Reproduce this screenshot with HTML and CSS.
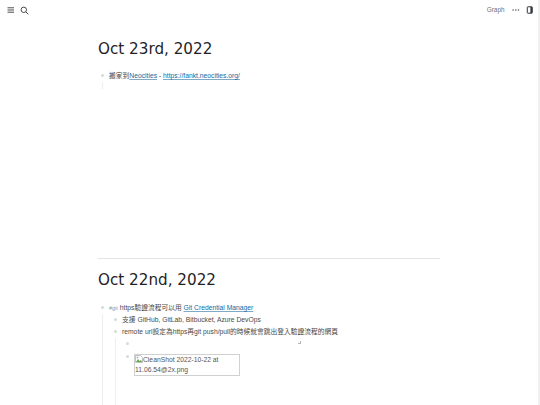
FILE: index.html
```html
<!DOCTYPE html>
<html lang="zh-Hant">
<head>
<meta charset="utf-8">
<title>Journals</title>
<link rel="stylesheet" href="styles.css">
</head>
<body>
<div class="app">
  <header class="topbar">
    <div class="tools">
      <svg class="icon" width="8" height="8" viewBox="0 0 8 8"><path d="M.5 1.8h6.5M.5 4h6.5M.5 6.2h6.5" fill="none" stroke="#33383c" stroke-width="0.9"/></svg>
      <svg class="icon" width="9" height="9" viewBox="0 0 9 9"><circle cx="3.8" cy="3.8" r="2.7" fill="none" stroke="#33383c" stroke-width="0.9"/><path d="M5.8 5.8L8.3 8.3" stroke="#33383c" stroke-width="0.9"/></svg>
    </div>
    <div class="tools tools-right">
      <span class="graph">Graph</span>
      <svg class="icon" width="8" height="8" viewBox="0 0 8 8"><path d="M.4 4h1.4M3.1 4h1.4M5.8 4h1.4" fill="none" stroke="#33383c" stroke-width="1"/></svg>
      <svg class="icon" width="8" height="8" viewBox="0 0 8 8"><rect x="2.3" y=".8" width="5" height="6.4" rx=".5" fill="none" stroke="#33383c" stroke-width="1"/><path d="M6.2 .8v6.4" stroke="#33383c" stroke-width="1.6"/></svg>
    </div>
  </header>
  <main class="journals">
    <section class="journal first">
      <h1>Oct 23rd, 2022</h1>
      <div class="block root">
        <div class="row"><span class="bullet"></span><span>搬家到<a href="#">Neocities</a> - <a href="#">https://fankt.neocities.org/</a></span></div>
      </div>
    </section>
    <section class="journal second">
      <h1>Oct 22nd, 2022</h1>
      <div class="block root">
        <div class="row"><span class="bullet"></span><span><span class="tag">#git</span> https驗證流程可以用 <a href="#">Git Credential Manager</a></span></div>
        <div class="children">
          <div class="block">
            <div class="row"><span class="bullet"></span><span>支援 GitHub, GitLab, Bitbucket, Azure DevOps</span></div>
          </div>
          <div class="block">
            <div class="row"><span class="bullet"></span><span>remote url設定為https再git push/pull的時候就會跳出登入驗證流程的網頁</span></div>
            <div class="children deep">
              <div class="block">
                <div class="row empty"><span class="bullet"></span><span class="resize"></span></div>
              </div>
              <div class="block">
                <div class="row"><span class="bullet"></span>
                  <div class="broken"><svg class="broken-icon" width="8" height="8" viewBox="0 0 8 8"><path d="M.5.5h5l2 2v5h-7z" fill="#fff" stroke="#a9a9a9" stroke-width=".7"/><path d="M1 7l2-3 1.5 2L6 5l1.2 2z" fill="#6aa84f"/><circle cx="2.5" cy="2.5" r=".9" fill="#8ab4f8"/></svg>CleanShot 2022-10-22 at 11.06.54@2x.png</div>
                </div>
              </div>
            </div>
          </div>
        </div>
      </div>
    </section>
  </main>
  <div class="scrollbar"></div>
</div>
</body>
</html>
```

FILE: styles.css
```css
* { box-sizing: border-box; }
html, body { margin: 0; height: 100%; overflow: hidden; background: #fff; }
body { font-family: "Liberation Sans", "Noto Sans CJK TC", sans-serif; font-size: 6.75px; line-height: 12px; color: #4a4a48; }
.app { position: relative; height: 405px; overflow: hidden; }
.topbar { height: 20px; padding: 0 7px; display: flex; align-items: center; justify-content: space-between; opacity: .999; }
.tools { display: flex; align-items: center; gap: 5px; }
.tools-right { gap: 5.5px; }
.icon { display: block; }
.graph { font-size: 6.4px; color: #707070; margin-right: 1.5px; }
.journals { padding-left: 98px; width: 440px; opacity: .999; }
.journal h1 { margin: 0; font: 400 15.2px/22px "DejaVu Sans", sans-serif; color: #1f2326; }
.first { padding-top: 18px; height: 239px; border-bottom: 1px solid #e4e4e4; }
.second { padding-top: 10px; }
.journal h1 + .root { margin-top: 10px; }
.second h1 + .root { margin-top: 11px; }
.row { display: flex; align-items: flex-start; min-height: 12px; padding-left: 3px; }
.bullet { flex: none; width: 3px; height: 3px; margin: 4px 5px 0 0; border-radius: 50%; background: #d5dbdc; }
a { color: #106ba3; text-decoration: underline; text-decoration-color: #7fa9c4; }
.first .root { position: relative; padding-bottom: 7px; }
.first .root::after { content: ""; position: absolute; left: 4px; top: 12px; bottom: 0; width: 1px; background: #eceeef; }
.tag { font-size: 5.5px; color: #7c9db5; }
.children { margin-left: 4px; padding-left: 8px; border-left: 1px solid #eceeef; }
.deep { margin-left: 4px; padding-left: 7px; height: 200px; }
.empty { position: relative; height: 13px; width: 178px; }
.resize { position: absolute; right: 0; top: 3px; width: 3px; height: 3px; border-right: 1px solid #b5b5b5; border-bottom: 1px solid #b5b5b5; }
.broken { width: 106px; height: 22px; margin-top: 3px; border: 1px solid #d0d0d0; color: #555; line-height: 10px; }
.broken-icon { display: inline-block; vertical-align: -1px; }
.scrollbar { position: absolute; right: 0; top: 0; width: 2px; height: 405px; background: #f1f1f1; }
```
